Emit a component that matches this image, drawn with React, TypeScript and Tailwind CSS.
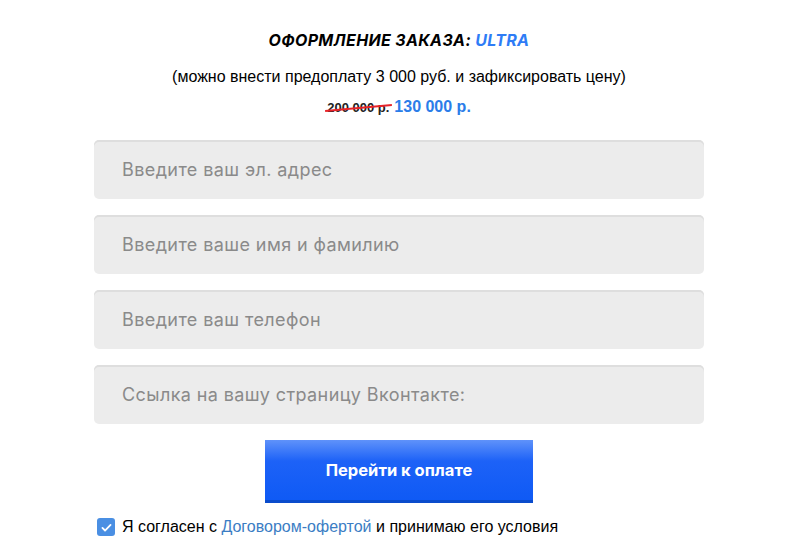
import React from 'react';

const fields = [
  'Введите ваш эл. адрес',
  'Введите ваше имя и фамилию',
  'Введите ваш телефон',
  'Ссылка на вашу страницу Вконтакте:',
];

export default function App() {
  const [agree, setAgree] = React.useState(true);

  return (
    <div className="min-h-[558px] w-full bg-white" style={{ fontFamily: '"Liberation Sans", Arial, sans-serif' }}>
      <div className="ml-[94px] flex w-[610px] flex-col items-center pt-[29px]">
        <h2
          className="text-[16px] font-bold italic leading-[22px] tracking-[0.35px] text-black"
          style={{ fontFamily: 'Inter, "DejaVu Sans", sans-serif' }}
        >
          ОФОРМЛЕНИЕ ЗАКАЗА: <span className="text-[#2e7cf6]">ULTRA</span>
        </h2>
        <p className="mt-[17px] text-[16px] leading-[18px] text-black">
          (можно внести предоплату 3 000 руб. и зафиксировать цену)
        </p>
        <div className="mt-[12px] flex items-baseline gap-[5px] leading-[18px]">
          <span className="relative text-[13px] font-bold text-[#222]">
            200 000 р.
            <span className="absolute left-[-2px] top-[8px] h-[2px] w-[67px] -rotate-[5deg] bg-[#e8232a]" />
          </span>
          <span className="text-[16px] font-bold text-[#2b7de9]">130 000 р.</span>
        </div>

        <div className="mt-[23px] flex w-full flex-col gap-[16px]">
          {fields.map((f) => (
            <input
              key={f}
              placeholder={f}
              className="h-[59px] w-full rounded-[5px] bg-[#ececec] px-[28px] text-[18px] tracking-[0.4px] text-[#333] outline-none shadow-[inset_0_2px_0_#dedede] placeholder:text-[#8a8a8a]"
              style={{ fontFamily: 'Inter, "DejaVu Sans", sans-serif', fontWeight: 400 }}
            />
          ))}
        </div>

        <button
          className="mt-[16px] h-[63px] w-[268px] border-b-[3px] border-[#0a4ccc] bg-[linear-gradient(180deg,#5f92fa_0%,#1d62f7_35%,#0f5af5_100%)] text-[16.5px] font-bold text-white"
          style={{ fontFamily: 'Inter, "DejaVu Sans", sans-serif' }}
        >
          Перейти к оплате
        </button>

        <label className="mt-[15px] flex w-full cursor-pointer items-center gap-[7px] pl-[3px] text-[16px] leading-[18px] text-black">
          <span
            onClick={() => setAgree(!agree)}
            className={`flex h-[18px] w-[18px] items-center justify-center rounded-[3px] ${agree ? 'bg-[#4a8fe3]' : 'border border-gray-400 bg-white'}`}
          >
            {agree && (
              <svg viewBox="0 0 16 16" className="h-[13px] w-[13px]" fill="none">
                <path d="M3 8.5l3.2 3.2L13 4.8" stroke="white" strokeWidth="2.2" strokeLinecap="round" strokeLinejoin="round" />
              </svg>
            )}
          </span>
          <span>
            Я согласен с <a className="text-[#3b7dc4]">Договором-офертой</a> и принимаю его условия
          </span>
        </label>
      </div>
    </div>
  );
}
